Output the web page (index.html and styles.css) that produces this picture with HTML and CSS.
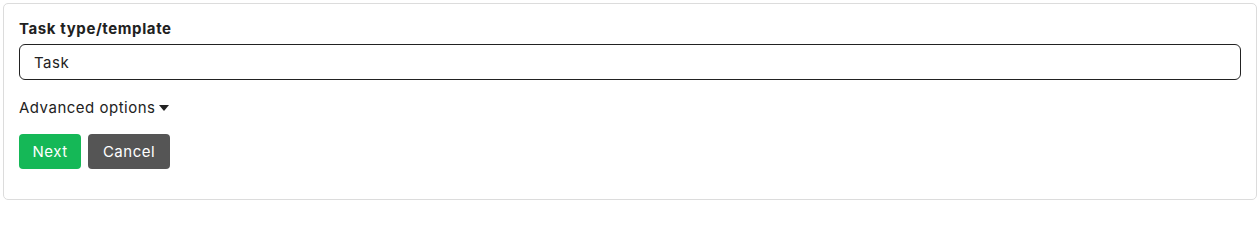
FILE: index.html
```html
<!DOCTYPE html>
<html>
<head>
<meta charset="utf-8">
<link rel="stylesheet" href="styles.css">
</head>
<body>
<div class="card">
  <label class="label" for="tt">Task type/template</label>
  <div class="input" id="tt">Task</div>
  <div class="advanced">Advanced options <span class="caret"></span></div>
  <div class="actions">
    <button class="btn btn-next">Next</button>
    <button class="btn btn-cancel">Cancel</button>
  </div>
</div>
</body>
</html>
```
FILE: styles.css
```css
html, body { margin: 0; padding: 0; background: #fff; }
body { padding: 3px 3px 0 3px; font-family: Inter, "Open Sans", "Liberation Sans", sans-serif; color: #212529; letter-spacing: 0.5px; }
.card {
  border: 1px solid #dcdcdc;
  border-radius: 5px;
  height: 197px;
  box-sizing: border-box;
  padding: 15px 15px 0 15px;
  display: flex;
  flex-direction: column;
}
.label { font-weight: 700; font-size: 15px; line-height: 20px; display: block; color: #212121; letter-spacing: 0.6px; }
.input {
  margin-top: 5px;
  height: 36px;
  box-sizing: border-box;
  border: 1px solid #222;
  border-radius: 6px;
  padding: 0 14px;
  display: flex;
  align-items: center;
  font-size: 15px;
  color: #222;
}
.advanced { margin-top: 18px; font-size: 15px; line-height: 20px; color: #222; display: flex; align-items: center; gap: 4px; }
.caret { width: 0; height: 0; border-left: 5px solid transparent; border-right: 5px solid transparent; border-top: 6px solid #222; }
.actions { margin-top: 16px; display: flex; gap: 7px; }
.btn {
  height: 35px;
  border: 0;
  border-radius: 4px;
  color: #fff;
  font-family: inherit;
  letter-spacing: inherit;
  font-size: 15px;
  padding: 0;
}
.btn-next { background: #15b857; width: 62px; }
.btn-cancel { background: #555; width: 82px; }
```
